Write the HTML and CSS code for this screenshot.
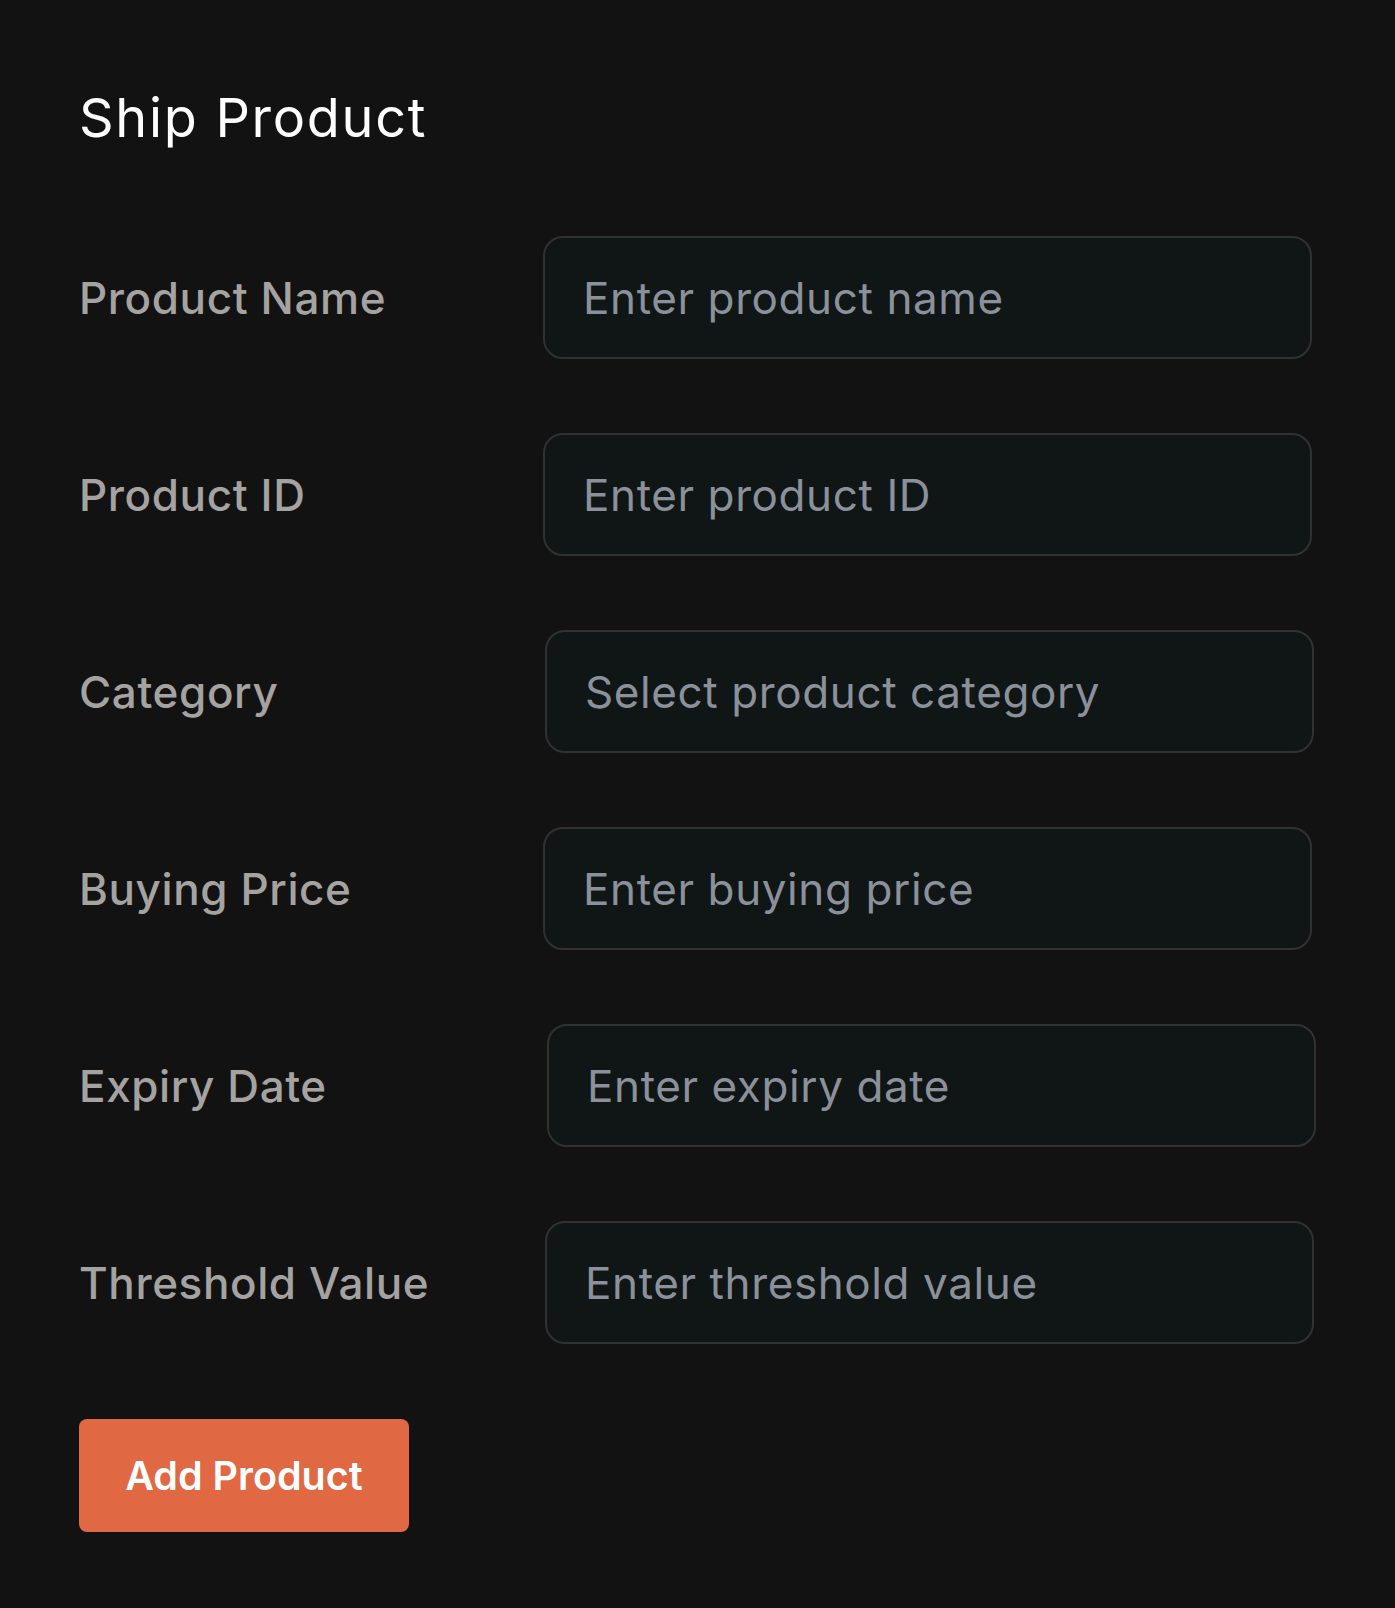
FILE: index.html
```
<!DOCTYPE html>
<html lang="en">
<head>
    <meta charset="UTF-8">
    <meta name="viewport" content="width=device-width, initial-scale=1.0">
    <title>Ship Product</title>
    <link rel="stylesheet" href="styles.css">
</head>
<body>
    <div class="ship-page">
        <h1 class="page-title">Ship Product</h1>
        <form class="product-form">
            <label class="field-label" for="product-name">Product Name</label>
            <input class="field-input" id="product-name" type="text" placeholder="Enter product name">

            <label class="field-label" for="product-id">Product ID</label>
            <input class="field-input" id="product-id" type="text" placeholder="Enter product ID">

            <label class="field-label" for="category">Category</label>
            <input class="field-input shift-sm" id="category" type="text" placeholder="Select product category">

            <label class="field-label" for="buying-price">Buying Price</label>
            <input class="field-input" id="buying-price" type="text" placeholder="Enter buying price">

            <label class="field-label" for="expiry-date">Expiry Date</label>
            <input class="field-input shift-md" id="expiry-date" type="text" placeholder="Enter expiry date">

            <label class="field-label" for="threshold">Threshold Value</label>
            <input class="field-input shift-sm" id="threshold" type="text" placeholder="Enter threshold value">
        </form>
        <button class="add-button" type="button">Add Product</button>
    </div>
</body>
</html>
```

FILE: styles.css
```
body {
    margin: 0;
    background-color: #131212;
    font-family: 'Inter', 'Noto Sans', sans-serif;
    min-height: 100vh;
}
.ship-page {
    padding: 86px 80px 60px 79px;
}
.page-title {
    margin: 0;
    font-size: 54px;
    line-height: 64px;
    font-weight: 400;
    letter-spacing: 1.7px;
    color: #ffffff;
}
.product-form {
    display: grid;
    grid-template-columns: 464px 769px;
    row-gap: 74px;
    align-items: center;
    margin-top: 86px;
}
.field-label {
    font-size: 44px;
    font-weight: 500;
    letter-spacing: 0.6px;
    color: #a4a3a2;
}
.field-input {
    box-sizing: border-box;
    width: 769px;
    height: 123px;
    padding: 0 38px;
    background-color: #0f1615;
    border: 2px solid #303232;
    border-radius: 20px;
    font-family: inherit;
    font-size: 44px;
    letter-spacing: 0.6px;
    color: #d0d3d8;
    outline: none;
}
.field-input::placeholder {
    color: #8b909b;
}
.field-input:focus {
    border-color: #3d4444;
}
.shift-sm {
    margin-left: 2px;
}
.shift-md {
    margin-left: 4px;
}
.add-button {
    display: block;
    margin-top: 75px;
    width: 330px;
    height: 113px;
    background-color: #e06842;
    color: #ffffff;
    border: none;
    border-radius: 8px;
    font-family: inherit;
    font-size: 39.5px;
    font-weight: 600;
    cursor: pointer;
}
.add-button:hover {
    background-color: #d25b36;
}
```
